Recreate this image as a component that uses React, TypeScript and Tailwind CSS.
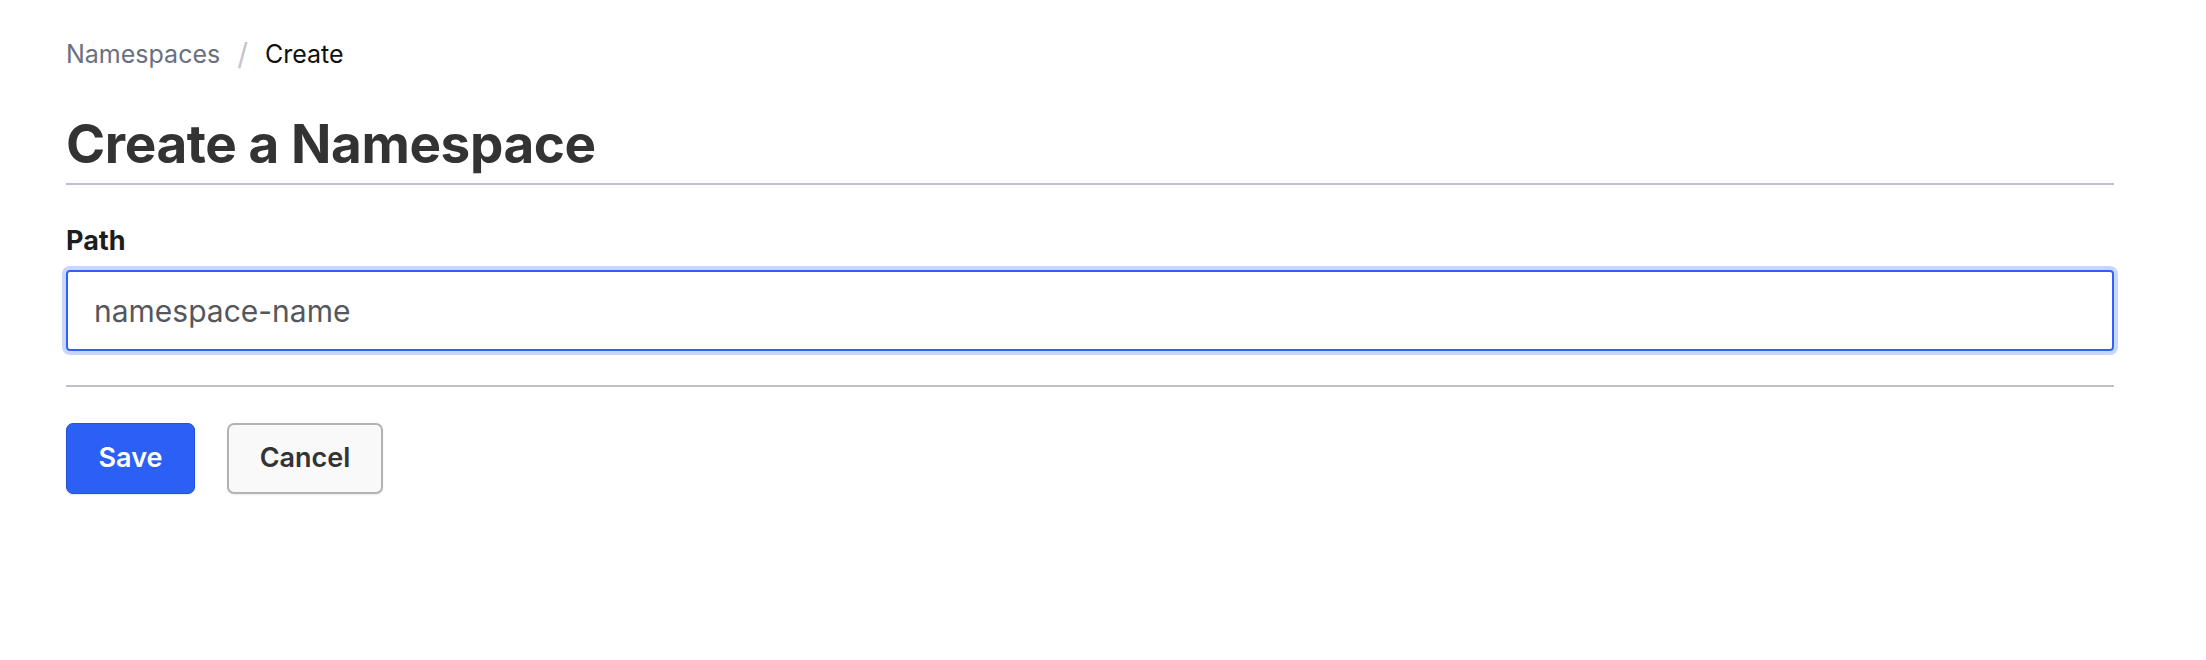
const App = () => {
  return (
    <div className="min-h-[660px] bg-white font-['Inter','Liberation_Sans',sans-serif]">
      <div className="w-[2048px] ml-[66px] pt-[36px]">
        <nav className="flex items-center text-[25px] leading-[36px]">
          <span className="text-[#6b7080]">Namespaces</span>
          <span className="mx-[17px] text-[#c4c6cc] text-[30px]">/</span>
          <span className="text-[#111111]">Create</span>
        </nav>

        <h1 className="mt-[40px] text-[53px] leading-[64px] font-bold text-[#333333] tracking-[-0.4px] pb-[7px] border-b-2 border-[#bfc1d0]">
          Create a Namespace
        </h1>

        <div className="mt-[41px]">
          <label className="block text-[27px] leading-[30px] font-bold text-[#1d1d1f]">Path</label>
          <input
            type="text"
            placeholder="namespace-name"
            className="mt-[14px] w-full h-[81px] px-[26px] rounded-[4px] border-2 border-[#2f62f2] ring-4 ring-[#c9d6fb] outline-none text-[30px] text-[#333] placeholder:text-[#55575f]"
          />
        </div>

        <div className="mt-[34px] border-t-2 border-[#c0c0c6]" />

        <div className="mt-[36px] flex gap-[32px]">
          <button className="h-[71px] w-[129px] rounded-[7px] bg-[#2c5ff5] border border-[#2553d8] text-white text-[27px] font-semibold shadow-[0_1px_2px_rgba(0,0,0,0.1)]">
            Save
          </button>
          <button className="h-[71px] w-[156px] rounded-[7px] bg-[#f9f9f9] border-2 border-[#b3b3b3] text-[#333333] text-[27px] font-semibold shadow-[0_1px_2px_rgba(0,0,0,0.08)]">
            Cancel
          </button>
        </div>
      </div>
    </div>
  )
}

export default App
